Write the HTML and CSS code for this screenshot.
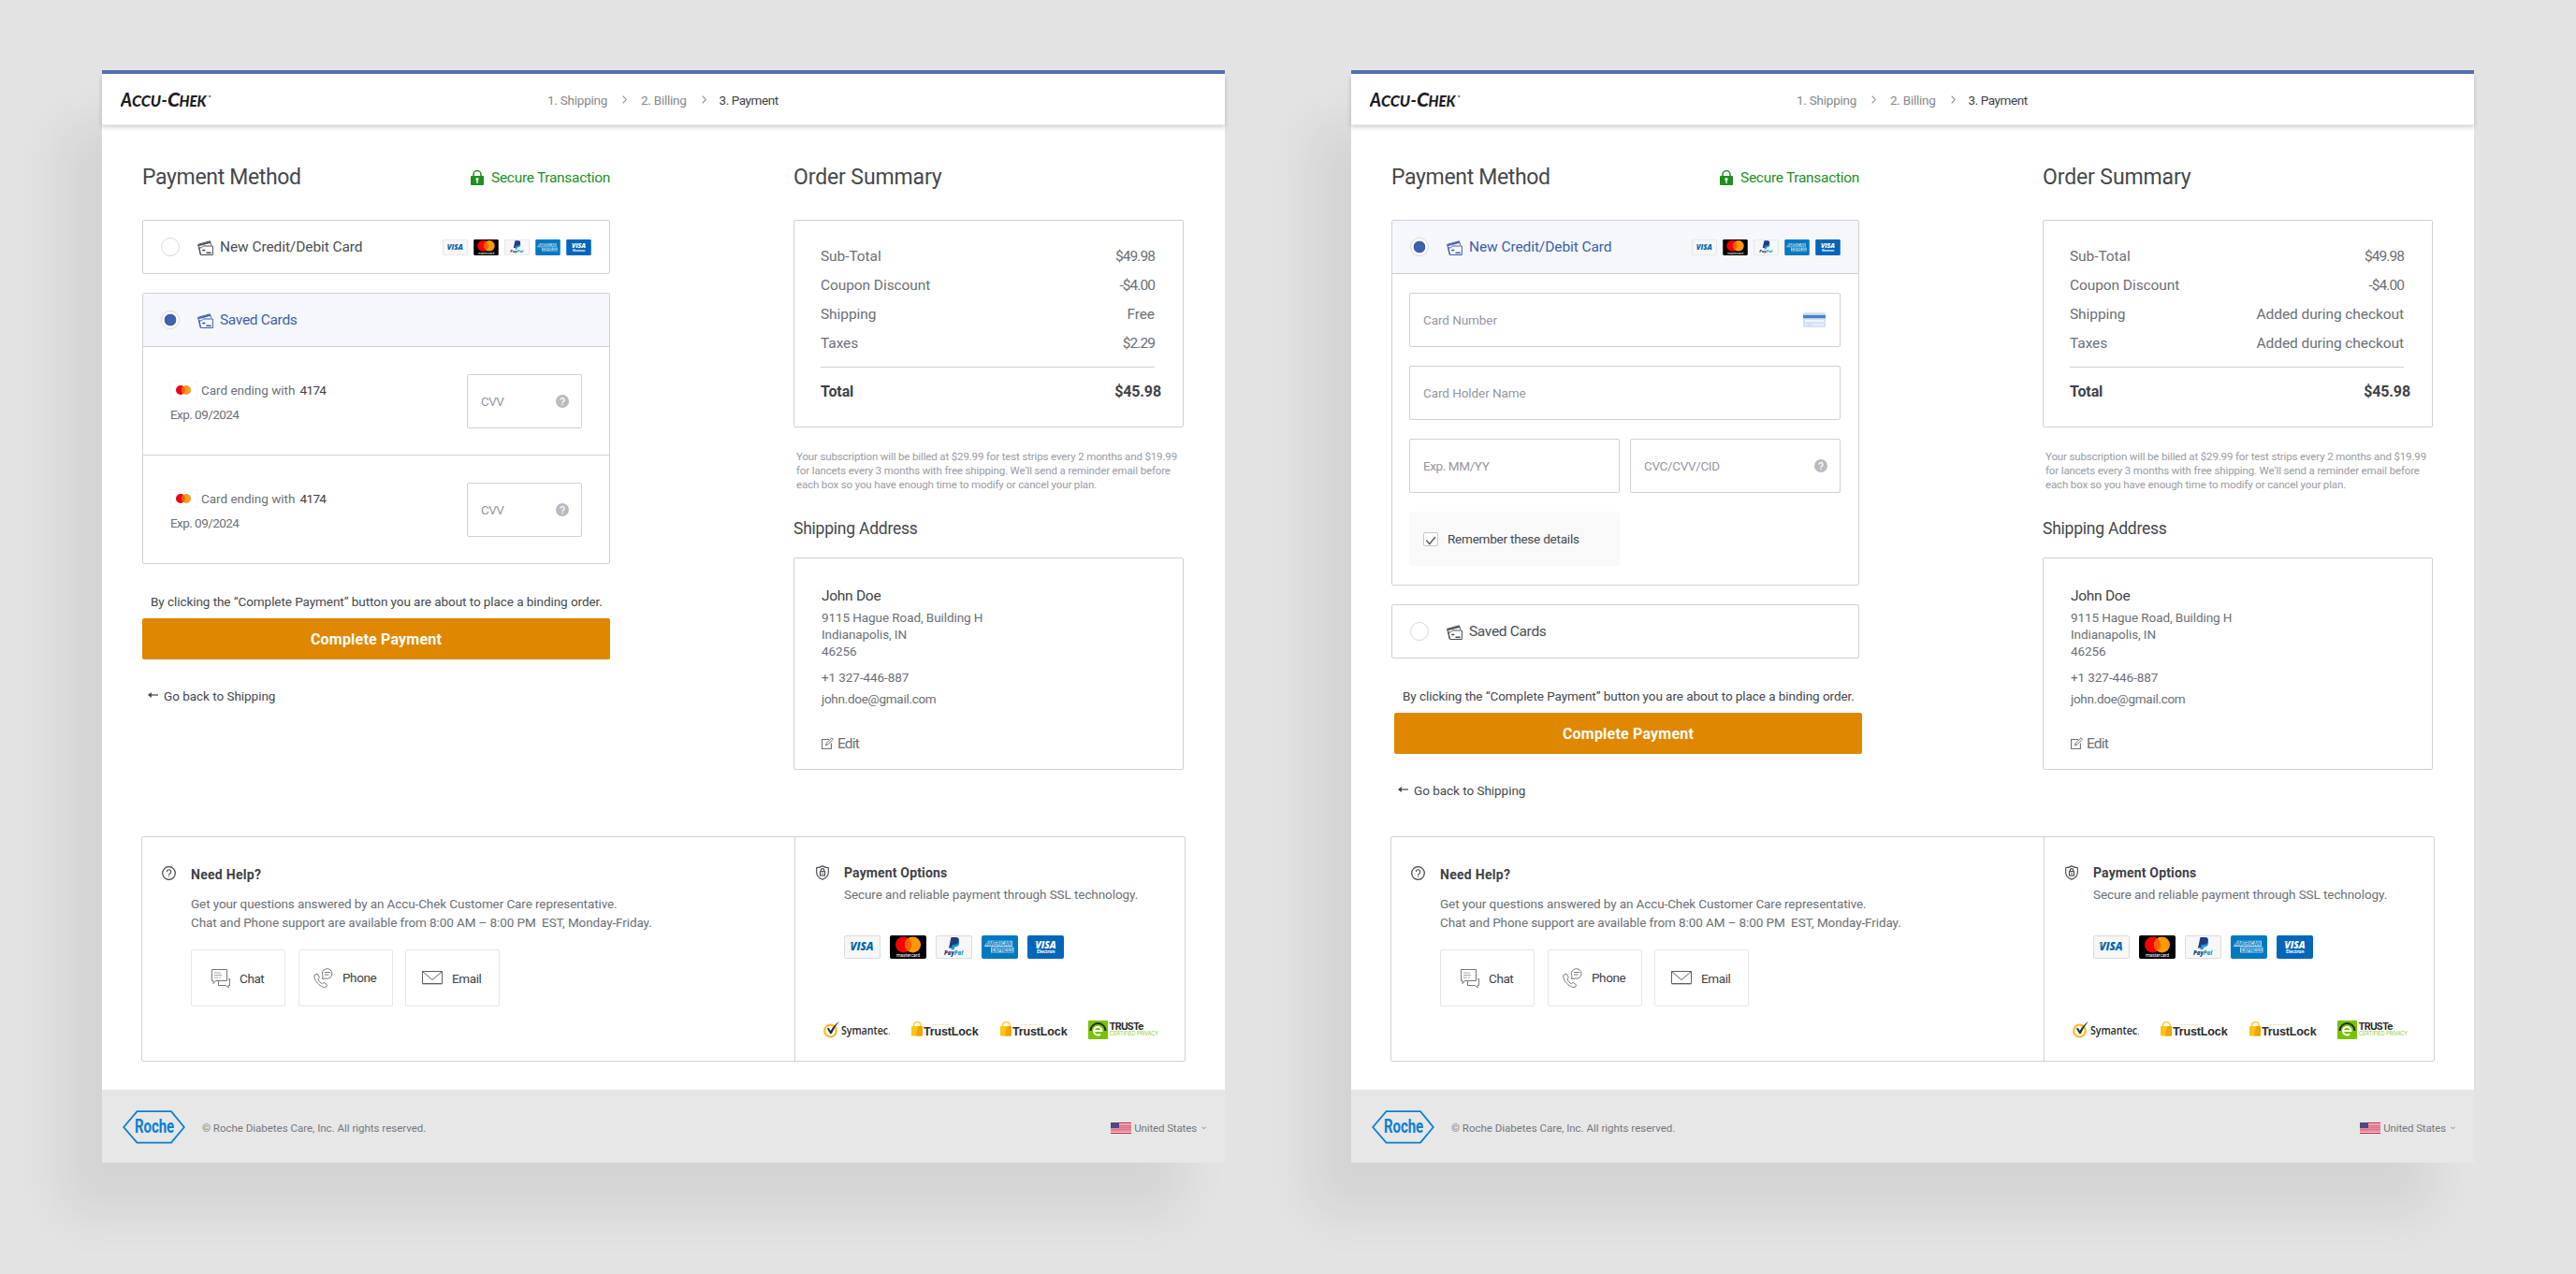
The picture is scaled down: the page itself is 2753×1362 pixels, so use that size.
FILE: index.html
```
<!DOCTYPE html>
<html lang="en">
<head>
<meta charset="utf-8">
<title>Accu-Chek Checkout - Payment</title>
<link rel="stylesheet" href="styles.css">
</head>
<body>

<!-- icons -->
<svg class="sprite" width="0" height="0">
  <symbol id="logo" viewBox="0 0 98 16">
    <text y="15" font-family="Lato" font-weight="900" font-style="italic" fill="#1d1d1f"><tspan x="0" font-size="20" textLength="12" lengthAdjust="spacingAndGlyphs">A</tspan><tspan x="12" font-size="16" textLength="31" lengthAdjust="spacingAndGlyphs">CCU</tspan><tspan x="43.5" font-size="18">-</tspan><tspan x="50" font-size="20" textLength="13" lengthAdjust="spacingAndGlyphs">C</tspan><tspan x="62.5" font-size="16" textLength="29" lengthAdjust="spacingAndGlyphs">HEK</tspan></text>
    <circle cx="95.2" cy="4" r="1.3" fill="#8a8a8c"/>
  </symbol>
  <symbol id="lock" viewBox="0 0 14 16">
    <path d="M3 7V4.6a4 4 0 0 1 8 0V7" fill="none" stroke="#1f8f1f" stroke-width="1.5"/>
    <rect y="6" width="14" height="10" rx="1" fill="#1f8f1f"/>
    <circle cx="7" cy="9.6" r="1.6" fill="#fff"/><path d="M6.3 10h1.4v4H6.3z" fill="#fff"/>
  </symbol>
  <symbol id="cards" viewBox="0 0 17 16">
    <g fill="none" stroke="currentColor" stroke-width="1">
      <path d="M3.200 15.300L.6 4.300 13.400.8l1.300 4.200"/>
      <path d="M.8 5.500L14 1.900" stroke-width="1.800"/>
      <path d="M2 7.800h2.400l2-1.800h10v9.500H3.600z"/>
      <path d="M5 10.500h3.400M6.900 9.300v2.400"/><path d="M9.500 13.300h5.200" stroke-width="1.600"/>
    </g>
  </symbol>
  <symbol id="visa" viewBox="0 0 39 25">
    <rect x=".5" y=".5" width="38" height="24" rx="1.5" fill="#f7f7f7" stroke="#dcdcde"/>
    <text x="6.5" y="16.2" font-family="Open Sans" font-size="11.5" font-weight="800" font-style="italic" fill="#0066b2" textLength="25" lengthAdjust="spacingAndGlyphs">VISA</text>
    <path d="M5.3 8.2h3.2l1.5 4c-1-2-2.400-3.200-4.700-4z" fill="#f7a823"/>
  </symbol>
  <symbol id="mastercard" viewBox="0 0 39 25">
    <rect width="39" height="25" rx="2" fill="#000"/>
    <circle cx="14.500" cy="10" r="8.500" fill="#f00"/><circle cx="24.500" cy="10" r="8.500" fill="#ff9a00"/>
    <path d="M19.500 3.100a8.500 8.500 0 0 1 0 13.800a8.500 8.500 0 0 1 0-13.800z" fill="#ff5f00"/>
    <text x="7" y="23" font-family="Roboto" font-size="5" fill="#fff" textLength="25">mastercard</text>
  </symbol>
  <symbol id="paypal" viewBox="0 0 39 25">
    <rect x=".5" y=".5" width="38" height="24" rx="1.500" fill="#f7f7f7" stroke="#dcdcde"/>
    <path d="M18 5h5c2 .8 2.600 2.300 2 4.300-.7 2.500-2.300 3.300-4.800 3.200l-.7 2.800h-3z" fill="#179bd7"/>
    <path d="M16.500 2h5.200c2.500 0 3.600 1.500 3.100 4-.6 2.800-2.300 4-5 4h-2l-.8 3.400h-3z" fill="#253b80"/>
    <text x="9" y="21" font-family="Open Sans" font-size="6" font-weight="800" font-style="italic" fill="#253b80" textLength="20">Pay<tspan fill="#179bd7">Pal</tspan></text>
  </symbol>
  <symbol id="amex" viewBox="0 0 39 25">
    <rect width="39" height="25" rx="2" fill="#0079c1"/>
    <path d="M3 11.500L6.500 5.800H33v6.200H3zM10 12.500h24.500v6H10z" fill="#a9d4ee"/>
    <text x="4.500" y="11.100" font-family="Roboto" font-size="6.500" font-weight="500" fill="#0079c1" textLength="27.500" lengthAdjust="spacingAndGlyphs">AMERICAN</text>
    <text x="11" y="17.800" font-family="Roboto" font-size="6.500" font-weight="500" fill="#0079c1" textLength="22.500" lengthAdjust="spacingAndGlyphs">EXPRESS</text>
  </symbol>
  <symbol id="electron" viewBox="0 0 39 25">
    <rect width="39" height="25" rx="2" fill="#0066b9"/>
    <text x="8.500" y="13.500" font-family="Open Sans" font-size="10" font-weight="800" font-style="italic" fill="#fff" textLength="22" lengthAdjust="spacingAndGlyphs">VISA</text>
    <path d="M7.500 6.300h2.800l1.300 3.700c-.9-1.800-2.100-2.900-4.100-3.700z" fill="#f7a823"/>
    <text x="10" y="19" font-family="Open Sans" font-size="5" font-weight="700" fill="#fff" textLength="19.500">Electron</text>
  </symbol>
  <symbol id="mc" viewBox="0 0 29 20">
    <rect x=".5" y=".5" width="28" height="19" fill="#fff" stroke="#f6f6f7"/>
    <circle cx="11" cy="10" r="5" fill="#eb001b"/><circle cx="17" cy="10" r="5" fill="#f79e1b"/>
    <path d="M14 6a5 5 0 0 1 0 8a5 5 0 0 1 0-8z" fill="#ff5f00"/>
  </symbol>
  <symbol id="hint" viewBox="0 0 14 14">
    <circle cx="7" cy="7" r="7" fill="#b9bbc1"/>
    <path d="M5 5.600a2 2 0 1 1 3 1.700c-.7.400-1 .7-1 1.400M7 9.800v1.400" fill="none" stroke="#fff" stroke-width="1.400"/>
  </symbol>
  <symbol id="card" viewBox="0 0 24 16">
    <rect width="24" height="16" rx="1.500" fill="#d3e2f6"/>
    <path d="M0 2.800h24v3.400H0z" fill="#4f7fc9"/>
    <path d="M2 8h20v2H2zM2 12.500h2v1.300H2zM10 12.500h12v1.300H10z" fill="#f1f6fd"/>
  </symbol>
  <symbol id="back" viewBox="0 0 11 8">
    <path d="M1 4h10" fill="none" stroke="#3f4246" stroke-width="1.200"/>
    <path d="M0 4l3.800-3v6z" fill="#3f4246"/>
  </symbol>
  <symbol id="chev" viewBox="0 0 5 9">
    <path d="M.7.700l3.500 3.800L.7 8.300" fill="none" stroke="#86898d" stroke-width="1.100"/>
  </symbol>
  <symbol id="down" viewBox="0 0 5 4">
    <path d="M.5.800l2 2 2-2" fill="none" stroke="#7d8084" stroke-width="1"/>
  </symbol>
  <symbol id="edit" viewBox="0 0 13 13">
    <path d="M8 2.500H.6v10h9.800V6.500" fill="none" stroke="#6c7076" stroke-width="1.100"/>
    <path d="M4.500 9l.7-2.500L11 .8l1.400 1.400L6.800 8z" fill="none" stroke="#6c7076" stroke-width="1"/>
  </symbol>
  <symbol id="help" viewBox="0 0 15 15">
    <circle cx="7.500" cy="7.500" r="6.800" fill="none" stroke="#3f4246" stroke-width="1.200"/>
    <path d="M5.300 6a2.200 2.200 0 1 1 3.300 1.900c-.8.400-1.100.8-1.100 1.500M7.500 10.400v1.200" fill="none" stroke="#3f4246" stroke-width="1.100"/>
  </symbol>
  <symbol id="shield" viewBox="0 0 14 16">
    <g fill="none" stroke="#3f4246" stroke-width="1.100">
      <path d="M7 .8c1.800 1.300 3.800 1.900 6.300 2v5c0 3.600-2.500 6-6.300 7.500C3.200 13.800.7 11.400.7 7.800v-5C3.200 2.700 5.200 2.100 7 .8z"/>
      <rect x="4.500" y="6.700" width="5" height="4.300"/><path d="M5.300 6.500V5.300a1.700 1.700 0 0 1 3.400 0v1.200M7 8.200v1.500"/>
    </g>
  </symbol>
  <symbol id="chat" viewBox="0 0 20 20">
    <g fill="none" stroke="#74777b" stroke-width="1">
      <path d="M.5.500h16v12H4.500l-2.500 3v-3H.5z"/>
      <path d="M3 4h7M3 6.500h8M3 9h4M8 9h2" stroke="#a5a7aa"/>
      <path d="M18 10.500h1.500v7h-1.500V20l-2.500-2.500H7.500v-5"/>
    </g>
  </symbol>
  <symbol id="phone" viewBox="0 0 21 21">
    <g fill="none" stroke="#74777b" stroke-width="1">
      <path d="M1.500 7l2.500-1 2.500 4-1.600 1.600c.8 2.400 2.400 4.200 4.500 5.200l1.700-1.500 3.400 2.600-1 2.400c-1.600.4-3.500 0-5-.9C4.300 17 1.300 13 .8 9c0-.8.200-1.400.7-2z"/>
      <path d="M9.500 11.500l.5-3a5.300 5.300 0 1 1 3 2.500z"/>
      <path d="M12 4.500h6M12 7h4.500"/>
    </g>
  </symbol>
  <symbol id="email" viewBox="0 0 22 15">
    <path d="M.5.500h21v13H.5zM.5.500L11 9.500 21.500.500" fill="none" stroke="#5d6064" stroke-width="1"/>
    <path d="M.5 14.500h21" stroke="#c9cacc"/>
  </symbol>
  <symbol id="symantec" viewBox="0 0 72 20">
    <circle cx="7.500" cy="11" r="6.300" fill="none" stroke="#fdbb30" stroke-width="2.300"/>
    <path d="M3.800 8.500l2-.6 1.900 3.100C10 7 13 3.500 17 1c-3.500 4-6 8.300-8.200 13.300H7.300z" fill="#2b2b2d"/>
    <text x="19" y="15" font-family="Open Sans" font-size="12" font-weight="600" fill="#2b2b2d" textLength="50" lengthAdjust="spacingAndGlyphs">Symantec</text>
    <circle cx="70.500" cy="14.500" r=".6" fill="#555"/>
  </symbol>
  <symbol id="trustlock" viewBox="0 0 73 20">
    <path d="M2.500 8V5a3.800 3.300 0 0 1 7.600 0v3" fill="none" stroke="#f9ce4a" stroke-width="1.600"/>
    <rect y="6" width="12" height="10.500" rx="1" fill="#fdc411"/><path d="M7 6h4q1 0 1 1v8.500q0 1-1 1H5z" fill="#f2a300"/>
    <path d="M22 4.500h18" stroke="#fbdcae" stroke-width="1" stroke-dasharray="2 .7"/>
    <text x="13" y="15.700" font-family="Liberation Sans" font-size="12.500" font-weight="700" fill="#2b2b2d" textLength="58.500">TrustLock</text>
  </symbol>
  <symbol id="truste" viewBox="0 0 76 20">
    <rect width="21" height="20" rx="1" fill="#78c300"/>
    <path d="M2.500 11a8 8 0 0 1 16 0" fill="none" stroke="#1f2a1a" stroke-width="2"/>
    <path d="M6.500 11h8a4.300 4.300 0 1 0-1.500 3.400" fill="none" stroke="#fff" stroke-width="2"/>
    <text x="22.500" y="10.300" font-family="Inter" font-size="10.500" font-weight="700" fill="#2b2b2d" textLength="37">TRUSTe</text>
    <text x="23" y="16.300" font-family="Inter" font-size="5.600" fill="#8fce3c" textLength="52">CERTIFIED PRIVACY</text>
  </symbol>
  <symbol id="roche" viewBox="0 0 67 36">
    <path d="M1.200 18L15.500 1.200H52L65.800 18 52 34.600H15.500z" fill="none" stroke="#0b7fd0" stroke-width="1.800"/>
    <text x="13" y="24" font-family="Roboto" font-size="20" font-weight="700" fill="#0b7fd0" textLength="42" lengthAdjust="spacingAndGlyphs">Roche</text>
  </symbol>
  <symbol id="flag" viewBox="0 0 22 12">
    <rect width="22" height="12" fill="#e58ba0"/>
    <path d="M0 .5h22M0 11.500h22" stroke="#c8193c"/>
    <path d="M0 1.500h22M0 10.500h22" stroke="#f3d3da"/>
    <path d="M0 3.500h22M0 5.500h22M0 7.500h22" stroke="#dd6c87" stroke-width=".7"/>
    <rect width="9" height="6" fill="#4a4a7d"/>
  </symbol>
</svg>

<div class="board">

  <!-- saved cards -->
  <div class="page">
    <header class="header">
      <svg class="logo"><use href="#logo"/></svg>
      <nav class="steps">
        <span class="step s1">1. Shipping</span>
        <svg class="chev"><use href="#chev"/></svg>
        <span class="step s2">2. Billing</span>
        <svg class="chev"><use href="#chev"/></svg>
        <span class="step s3 current">3. Payment</span>
      </nav>
    </header>

    <main class="main">
      <section class="left">
        <div class="title-row">
          <h1>Payment Method</h1>
          <span class="secure"><svg><use href="#lock"/></svg>Secure Transaction</span>
        </div>

        <div class="option">
          <div class="option-head">
            <span class="radio"></span>
            <svg class="cards"><use href="#cards"/></svg>
            <span class="new-card">New Credit/Debit Card</span>
            <span class="pay-icons small">
              <svg><use href="#visa"/></svg><svg><use href="#mastercard"/></svg><svg><use href="#paypal"/></svg><svg><use href="#amex"/></svg><svg><use href="#electron"/></svg>
            </span>
          </div>
        </div>

        <div class="option">
          <div class="option-head active">
            <span class="radio"></span>
            <svg class="cards"><use href="#cards"/></svg>
            <span class="saved">Saved Cards</span>
          </div>
          <div class="saved-row">
            <div class="saved-info">
              <div class="saved-num"><svg><use href="#mc"/></svg>Card ending with <b>4174</b></div>
              <div class="exp">Exp. 09/2024</div>
            </div>
            <div class="field cvv">CVV<svg class="hint"><use href="#hint"/></svg></div>
          </div>
          <div class="saved-row">
            <div class="saved-info">
              <div class="saved-num"><svg><use href="#mc"/></svg>Card ending with <b>4174</b></div>
              <div class="exp">Exp. 09/2024</div>
            </div>
            <div class="field cvv">CVV<svg class="hint"><use href="#hint"/></svg></div>
          </div>
        </div>

        <div class="submit">
          <p>By clicking the “Complete Payment” button you are about to place a binding order.</p>
          <button class="btn">Complete Payment</button>
          <a class="back"><svg><use href="#back"/></svg>Go back to Shipping</a>
        </div>
      </section>

      <section class="right">
        <h1 class="summary-title">Order Summary</h1>
        <div class="summary">
          <div class="row"><span>Sub-Total</span><span class="price">$49.98</span></div>
          <div class="row"><span>Coupon Discount</span><span class="price">-$4.00</span></div>
          <div class="row"><span>Shipping</span><span>Free</span></div>
          <div class="row"><span>Taxes</span><span class="price">$2.29</span></div>
          <hr>
          <div class="row total"><span>Total</span><span>$45.98</span></div>
        </div>
        <p class="note">Your subscription will be billed at $29.99 for test strips every 2 months and $19.99<br>for lancets every 3 months with free shipping. We‘ll send a reminder email before<br>each box so you have enough time to modify or cancel your plan.</p>
        <h2>Shipping Address</h2>
        <div class="address">
          <div class="name">John Doe</div>
          <div class="street">9115 Hague Road, Building H<br>Indianapolis, IN<br>46256</div>
          <div class="contact">+1 327-446-887<br><span class="mail">john.doe@gmail.com</span></div>
          <a class="edit"><svg><use href="#edit"/></svg>Edit</a>
        </div>
      </section>
    </main>

    <div class="info">
      <section class="help">
        <svg class="help-icon"><use href="#help"/></svg>
        <div>
          <h3>Need Help?</h3>
          <p>Get your questions answered by an Accu-Chek Customer Care representative.<br>Chat and Phone support are available from 8:00 AM – 8:00 PM &nbsp;EST, Monday-Friday.</p>
          <div class="contacts">
            <a class="chat"><svg><use href="#chat"/></svg>Chat</a>
            <a class="phone"><svg><use href="#phone"/></svg>Phone</a>
            <a class="email"><svg><use href="#email"/></svg>Email</a>
          </div>
        </div>
      </section>
      <section class="options">
        <div class="options-top">
          <svg class="shield"><use href="#shield"/></svg>
          <div>
            <h3>Payment Options</h3>
            <p>Secure and reliable payment through SSL technology.</p>
            <div class="pay-icons">
              <svg><use href="#visa"/></svg><svg><use href="#mastercard"/></svg><svg><use href="#paypal"/></svg><svg><use href="#amex"/></svg><svg><use href="#electron"/></svg>
            </div>
          </div>
        </div>
        <div class="badges">
          <svg class="symantec"><use href="#symantec"/></svg>
          <svg class="trustlock"><use href="#trustlock"/></svg>
          <svg class="trustlock"><use href="#trustlock"/></svg>
          <svg class="truste"><use href="#truste"/></svg>
        </div>
      </section>
    </div>

    <footer class="footer">
      <svg class="roche"><use href="#roche"/></svg>
      <span class="copy">© Roche Diabetes Care, Inc. All rights reserved.</span>
      <span class="country"><svg class="flag"><use href="#flag"/></svg>United States<svg class="down"><use href="#down"/></svg></span>
    </footer>
  </div>

  <!-- new card -->
  <div class="page">
    <header class="header">
      <svg class="logo"><use href="#logo"/></svg>
      <nav class="steps">
        <span class="step s1">1. Shipping</span>
        <svg class="chev"><use href="#chev"/></svg>
        <span class="step s2">2. Billing</span>
        <svg class="chev"><use href="#chev"/></svg>
        <span class="step s3 current">3. Payment</span>
      </nav>
    </header>

    <main class="main">
      <section class="left">
        <div class="title-row">
          <h1>Payment Method</h1>
          <span class="secure"><svg><use href="#lock"/></svg>Secure Transaction</span>
        </div>

        <div class="option">
          <div class="option-head active">
            <span class="radio"></span>
            <svg class="cards"><use href="#cards"/></svg>
            <span class="new-card">New Credit/Debit Card</span>
            <span class="pay-icons small">
              <svg><use href="#visa"/></svg><svg><use href="#mastercard"/></svg><svg><use href="#paypal"/></svg><svg><use href="#amex"/></svg><svg><use href="#electron"/></svg>
            </span>
          </div>
          <div class="form">
            <div class="field wide">Card Number<svg class="card"><use href="#card"/></svg></div>
            <div class="field wide">Card Holder Name</div>
            <div class="field exp">Exp. MM/YY</div>
            <div class="field cid">CVC/CVV/CID<svg class="hint"><use href="#hint"/></svg></div>
            <div class="remember">
              <span class="check"><svg viewBox="0 0 14 14"><path d="M2.300 7.500l3.500 4L12 4" fill="none" stroke="#5b6066" stroke-width="1.500"/></svg></span>
              Remember these details
            </div>
          </div>
        </div>

        <div class="option">
          <div class="option-head">
            <span class="radio"></span>
            <svg class="cards"><use href="#cards"/></svg>
            <span class="saved">Saved Cards</span>
          </div>
        </div>

        <div class="submit shifted">
          <p>By clicking the “Complete Payment” button you are about to place a binding order.</p>
          <button class="btn">Complete Payment</button>
          <a class="back"><svg><use href="#back"/></svg>Go back to Shipping</a>
        </div>
      </section>

      <section class="right">
        <h1 class="summary-title">Order Summary</h1>
        <div class="summary">
          <div class="row"><span>Sub-Total</span><span class="price">$49.98</span></div>
          <div class="row"><span>Coupon Discount</span><span class="price">-$4.00</span></div>
          <div class="row"><span>Shipping</span><span>Added during checkout</span></div>
          <div class="row"><span>Taxes</span><span>Added during checkout</span></div>
          <hr>
          <div class="row total"><span>Total</span><span>$45.98</span></div>
        </div>
        <p class="note">Your subscription will be billed at $29.99 for test strips every 2 months and $19.99<br>for lancets every 3 months with free shipping. We‘ll send a reminder email before<br>each box so you have enough time to modify or cancel your plan.</p>
        <h2>Shipping Address</h2>
        <div class="address">
          <div class="name">John Doe</div>
          <div class="street">9115 Hague Road, Building H<br>Indianapolis, IN<br>46256</div>
          <div class="contact">+1 327-446-887<br><span class="mail">john.doe@gmail.com</span></div>
          <a class="edit"><svg><use href="#edit"/></svg>Edit</a>
        </div>
      </section>
    </main>

    <div class="info">
      <section class="help">
        <svg class="help-icon"><use href="#help"/></svg>
        <div>
          <h3>Need Help?</h3>
          <p>Get your questions answered by an Accu-Chek Customer Care representative.<br>Chat and Phone support are available from 8:00 AM – 8:00 PM &nbsp;EST, Monday-Friday.</p>
          <div class="contacts">
            <a class="chat"><svg><use href="#chat"/></svg>Chat</a>
            <a class="phone"><svg><use href="#phone"/></svg>Phone</a>
            <a class="email"><svg><use href="#email"/></svg>Email</a>
          </div>
        </div>
      </section>
      <section class="options">
        <div class="options-top">
          <svg class="shield"><use href="#shield"/></svg>
          <div>
            <h3>Payment Options</h3>
            <p>Secure and reliable payment through SSL technology.</p>
            <div class="pay-icons">
              <svg><use href="#visa"/></svg><svg><use href="#mastercard"/></svg><svg><use href="#paypal"/></svg><svg><use href="#amex"/></svg><svg><use href="#electron"/></svg>
            </div>
          </div>
        </div>
        <div class="badges">
          <svg class="symantec"><use href="#symantec"/></svg>
          <svg class="trustlock"><use href="#trustlock"/></svg>
          <svg class="trustlock"><use href="#trustlock"/></svg>
          <svg class="truste"><use href="#truste"/></svg>
        </div>
      </section>
    </div>

    <footer class="footer">
      <svg class="roche"><use href="#roche"/></svg>
      <span class="copy">© Roche Diabetes Care, Inc. All rights reserved.</span>
      <span class="country"><svg class="flag"><use href="#flag"/></svg>United States<svg class="down"><use href="#down"/></svg></span>
    </footer>
  </div>

</div>
</body>
</html>
```
FILE: styles.css
```
* {
    box-sizing: border-box;
    margin: 0;
    padding: 0;
}
body {
    background-color: #e3e3e3;
    font-family: Roboto, sans-serif;
    font-size: 13.5px;
    letter-spacing: -0.08px;
    color: #45484c;
    overflow: hidden;
}
svg {
    display: block;
    flex: none;
}
.sprite {
    display: none;
}
.board {
    display: flex;
    gap: 135px;
    height: 1362px;
    padding: 75px 0 0 109px;
}
.page {
    width: 1200px;
    height: 1168px;
    flex: none;
    background-color: #fff;
    border-top: 4px solid #5470b4;
    box-shadow: -45px 56px 50px rgba(0,0,0,0.065);
    display: flex;
    flex-direction: column;
}

/* header */
.header {
    height: 54px;
    flex: none;
    display: flex;
    align-items: center;
    padding: 0 20px;
    box-shadow: 0 1px 0 #e6e6e6, 0 3px 5px rgba(0,0,0,0.2);
    background-color: #fff;
}
.logo {
    width: 98px;
    height: 16px;
    margin-top: 1px;
}
.steps {
    display: flex;
    align-items: center;
    margin-left: 358px;
    line-height: 20px;
    padding-top: 2px;
    color: #86898d;
}
.step {
    white-space: nowrap;
}
.s1 {
    width: 80px;
    letter-spacing: -0.24px;
}
.s2 {
    width: 64.5px;
    margin-left: 15px;
    letter-spacing: -0.24px;
}
.s3 {
    margin-left: 14px;
    letter-spacing: -0.42px;
}
.current {
    color: #3f4246;
}
.chev {
    width: 5px;
    height: 9px;
    margin-top: -2px;
}

/* columns */
.main {
    display: flex;
    gap: 196px;
    height: 761px;
    flex: none;
    padding: 41px 43px 0;
}
.left {
    width: 500px;
}
.right {
    width: 417px;
}
h1 {
    font-size: 23px;
    font-weight: 400;
    line-height: 32px;
    letter-spacing: -0.34px;
}
.title-row {
    display: flex;
    justify-content: space-between;
    align-items: center;
    margin-bottom: 29px;
}
.secure {
    display: flex;
    align-items: center;
    gap: 8px;
    font-size: 15.5px;
    letter-spacing: -0.3px;
    color: #1f8f1f;
}
.secure svg {
    width: 14px;
    height: 16px;
}

/* payment options */
.option {
    border: 1px solid #cfd1d5;
    border-radius: 2px;
    margin-bottom: 20px;
}
.option-head {
    display: flex;
    align-items: center;
    height: 56px;
    padding: 0 19px;
    font-size: 15.5px;
    color: #4b4e54;
}
.active {
    background-color: #f5f7fb;
    color: #4160ad;
    height: 57px;
    border-bottom: 1px solid #cfd1d5;
}
.radio {
    width: 20px;
    height: 20px;
    border: 1px solid #d8d9dc;
    border-radius: 50%;
    background-color: #fff;
}
.active .radio {
    background: radial-gradient(circle, #4160ad 6px, #fff 6.7px);
}
.cards {
    width: 17px;
    height: 16px;
    margin: 2px 7px 0 19px;
}
.new-card {
    letter-spacing: -0.09px;
}
.saved {
    letter-spacing: -0.33px;
}
.pay-icons {
    display: flex;
    gap: 10px;
}
.pay-icons svg {
    width: 39px;
    height: 25px;
}
.small {
    margin-left: auto;
    gap: 6px;
}
.small svg {
    width: 27px;
    height: 17px;
}
.saved-row {
    display: flex;
    justify-content: space-between;
    height: 116px;
    padding: 29px 29px 0;
    border-bottom: 1px solid #cfd1d5;
}
.saved-row:last-child {
    height: 115px;
    border-bottom: 0;
}
.saved-info {
    padding-top: 4px;
    line-height: 26px;
    color: #6c7076;
}
.saved-num {
    display: flex;
    align-items: center;
    letter-spacing: -0.02px;
}
.saved-num svg {
    width: 29px;
    height: 20px;
    margin-right: 4px;
}
.saved-num b {
    font-weight: 400;
    color: #3f4246;
    margin-left: 5px;
    letter-spacing: -0.6px;
}
.saved-info .exp {
    letter-spacing: -0.55px;
}
.field {
    display: flex;
    align-items: center;
    justify-content: space-between;
    height: 58px;
    padding: 0 14px;
    border: 1px solid #cfd1d5;
    border-radius: 2px;
    color: #94979e;
    background-color: #fff;
}
.cvv {
    width: 123px;
    padding: 0 13px 0 14px;
    letter-spacing: -0.6px;
}
.hint {
    width: 14px;
    height: 14px;
}
.form {
    display: grid;
    grid-template-columns: 225px 225px;
    gap: 20px 11px;
    padding: 20px 18px;
}
.wide {
    grid-column: 1 / 3;
}
.field.exp {
    letter-spacing: -0.4px;
}
.cid {
    padding-right: 13px;
    letter-spacing: -0.35px;
}
.card {
    width: 24px;
    height: 16px;
    margin-right: 1px;
}
.remember {
    display: flex;
    align-items: center;
    height: 58px;
    padding-left: 15px;
    border-radius: 2px;
    background-color: #f9f9f9;
    letter-spacing: -0.22px;
}
.check {
    width: 16px;
    height: 15px;
    margin-right: 10px;
    border: 1px solid #c3c5c9;
    border-radius: 2px;
    background-color: #fff;
}
.submit {
    margin-top: 30px;
}
.submit p {
    line-height: 20px;
    padding-left: 9px;
    margin-bottom: 8px;
    white-space: nowrap;
    letter-spacing: -0.06px;
}
.btn {
    display: block;
    width: 500px;
    height: 44px;
    border: 0;
    border-radius: 2px;
    background-color: #e08700;
    color: #fff;
    font: 700 16px Roboto, sans-serif;
    letter-spacing: 0.2px;
}
.back {
    display: flex;
    align-items: center;
    gap: 6px;
    margin: 29px 0 0 6px;
    line-height: 20px;
    letter-spacing: -0.03px;
}
.back svg {
    width: 11px;
    height: 8px;
    margin-top: -2px;
}
/* this block sits a little to the right under the open form */
.shifted {
    margin-left: 3px;
    margin-right: -3px;
}
.shifted .back {
    margin-left: 4px;
}

/* summary */
.summary-title {
    letter-spacing: -0.12px;
    margin-bottom: 29px;
}
.summary {
    height: 222px;
    padding: 23px 30px 0 28px;
    border: 1px solid #cfd1d5;
    border-radius: 2px;
    font-size: 15.5px;
    color: #6c7076;
}
.row {
    display: flex;
    justify-content: space-between;
    line-height: 31px;
}
.price {
    letter-spacing: -0.95px;
}
.summary hr {
    border: 0;
    border-top: 1px solid #cfd1d5;
    margin: 9px 0 10px;
}
.total {
    font-size: 16px;
    font-weight: 700;
    color: #3f4246;
    margin-right: -7px;
    letter-spacing: -0.12px;
}
.note {
    margin: 24px 0 27px 3px;
    font-size: 11.5px;
    line-height: 15px;
    color: #9a9ca3;
    letter-spacing: -0.14px;
    white-space: nowrap;
}
h2 {
    font-size: 17.5px;
    font-weight: 400;
    line-height: 24px;
    margin-bottom: 19px;
    letter-spacing: -0.23px;
}
.address {
    height: 227px;
    padding: 30px 29px 0;
    border: 1px solid #cfd1d5;
    border-radius: 2px;
    color: #6c7076;
}
.name {
    font-size: 15.5px;
    line-height: 20px;
    color: #3f4246;
    letter-spacing: -0.28px;
    margin-bottom: 4px;
}
.street {
    line-height: 18px;
}
.contact {
    margin: 8px 0 26px;
    line-height: 23px;
}
.mail {
    letter-spacing: -0.28px;
}
.edit {
    display: flex;
    align-items: center;
    gap: 4px;
    font-size: 15.5px;
    line-height: 20px;
    letter-spacing: -0.8px;
}
.edit svg {
    width: 13px;
    height: 13px;
    margin-top: -2px;
}

/* help and payment info */
.info {
    display: flex;
    width: 1116px;
    height: 241px;
    flex: none;
    margin: 0 0 30px 42px;
    border: 1px solid #cfd1d5;
    border-radius: 2px;
    color: #6c7076;
}
.help {
    width: 697px;
    display: flex;
    padding: 29px 0 0 21px;
}
.help-icon {
    width: 15px;
    height: 15px;
    margin: 2px 16px 0 0;
}
h3 {
    font-size: 14px;
    font-weight: 700;
    line-height: 20px;
    color: #3f4246;
    letter-spacing: 0.15px;
}
.help h3 {
    letter-spacing: 0.29px;
    margin-top: 1px;
}
.help p {
    margin: 11px 0 19px;
    line-height: 20px;
    letter-spacing: -0.1px;
}
.contacts {
    display: flex;
}
.contacts a {
    display: flex;
    align-items: center;
    width: 101px;
    height: 61px;
    border: 1px solid #e6e7e9;
    border-radius: 2px;
    color: #3f4246;
    letter-spacing: -0.4px;
}
.chat svg {
    width: 20px;
    height: 20px;
    margin: 0 10px 0 21px;
}
.contacts .phone {
    margin: 0 13px 0 14px;
    padding-bottom: 1px;
}
.phone svg {
    width: 21px;
    height: 21px;
    margin: 0 10px 0 15px;
}
.email svg {
    width: 22px;
    height: 15px;
    margin: 0 10px 0 17px;
}
.options {
    flex: 1;
    border-left: 1px solid #cfd1d5;
    padding: 28px 0 0 22px;
}
.options-top {
    display: flex;
}
.shield {
    width: 14px;
    height: 16px;
    margin: 2px 16px 0 0;
}
.options p {
    margin: 3px 0 34px;
    line-height: 20px;
}
.badges {
    display: flex;
    margin: 66px 0 0 8px;
}
.symantec {
    width: 72px;
    height: 20px;
    margin-right: 22px;
}
.trustlock {
    width: 73px;
    height: 20px;
    margin-right: 22px;
}
.truste {
    width: 76px;
    height: 20px;
    margin-left: -1px;
}

/* footer */
.footer {
    display: flex;
    align-items: center;
    height: 78px;
    padding: 2px 20px 0 22px;
    background-color: #e7e7e7;
    color: #74777b;
    font-size: 11.5px;
}
.roche {
    width: 67px;
    height: 36px;
    margin-right: 18px;
}
.copy {
    letter-spacing: -0.01px;
    padding-top: 2px;
}
.country {
    display: flex;
    align-items: center;
    margin-left: auto;
    padding-top: 2px;
    letter-spacing: -0.13px;
}
.flag {
    width: 22px;
    height: 12px;
    margin-right: 3px;
}
.down {
    width: 5px;
    height: 4px;
    margin-left: 5px;
}
```
